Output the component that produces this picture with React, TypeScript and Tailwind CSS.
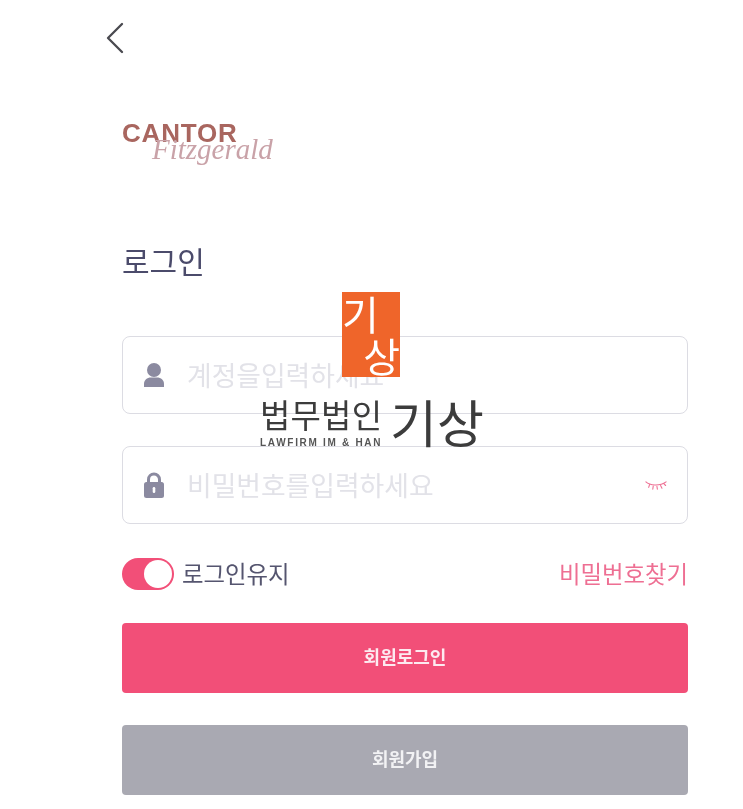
import { ChevronLeft } from "lucide-react";

const font = { fontFamily: '"Noto Sans CJK KR", "Noto Sans", sans-serif' };

function UserIcon() {
  return (
    <svg width="22" height="24" viewBox="0 0 22 24" fill="#8b8aa0">
      <circle cx="11" cy="7" r="7" />
      <path d="M1 24v-3c0-4 3-6.500 7-6.500h6c4 0 7 2.500 7 6.500v3z" />
    </svg>
  );
}

function LockIcon() {
  return (
    <svg width="20" height="26" viewBox="0 0 20 26" fill="none">
      <path d="M4.500 11V7.500a5.500 5.500 0 0 1 11 0V11" stroke="#8b8aa0" strokeWidth="3" />
      <rect x="0" y="10" width="20" height="16" rx="2.500" fill="#8b8aa0" />
      <rect x="8.700" y="15" width="2.600" height="6" rx="1.300" fill="#fff" />
    </svg>
  );
}

function ClosedEye() {
  return (
    <svg width="22" height="11" viewBox="0 0 24 12" fill="none" stroke="#ee6f93" strokeWidth="1.2" strokeLinecap="round">
      <path d="M1 2c4 4 15 5 22 0" />
      <path d="M5 5 4 8M9 6.500 8.500 10M13 6.800 13.500 10M17 6 18.500 9M20.500 4 22.500 6" />
    </svg>
  );
}

function Field({ icon, placeholder, right }: { icon: React.ReactNode; placeholder: string; right?: React.ReactNode }) {
  return (
    <div className="flex h-[78px] items-center rounded-lg border border-[#dcdce3] bg-white pl-[20px] pr-[20px]">
      <div className="flex w-[22px] justify-center">{icon}</div>
      <span className="ml-[22px] flex-1 text-[26.8px] leading-none text-[#e2e2e8]">{placeholder}</span>
      {right}
    </div>
  );
}

export default function App() {
  return (
    <div className="relative h-[809px] w-[743px] overflow-hidden bg-white blur-[0.5px]" style={font}>
      <div className="pl-[122px] pr-[55px]">
        <div className="h-[76px] pt-[10px]">
          <ChevronLeft className="ml-[-35px] h-[56px] w-[56px] text-[#4a4a50]" strokeWidth={1} />
        </div>

        {/* 로고 */}
        <div className="relative h-[90px] w-[160px] pt-[42px]">
          <div
            className="text-[26px] leading-[30px] font-bold tracking-[0.8px] text-[#a9665f]"
            style={{ fontFamily: '"Liberation Sans", sans-serif' }}
          >
            CANTOR
          </div>
          <div
            className="absolute left-[30px] top-[58px] text-[29px] leading-[30px] whitespace-nowrap text-[#c9a2a8] italic"
            style={{ fontFamily: '"Liberation Serif", serif' }}
          >
            Fitzgerald
          </div>
        </div>

        <h1 className="mt-[72px] text-[30px] leading-[44px] font-normal text-[#4b4b6b]">로그인</h1>

        <div className="mt-[54px] flex flex-col gap-[32px]">
          <Field icon={<UserIcon />} placeholder="계정을입력하세요" />
          <Field icon={<LockIcon />} placeholder="비밀번호를입력하세요" right={<ClosedEye />} />
        </div>

        <div className="mt-[34px] flex h-[32px] items-center justify-between">
          <div className="flex items-center gap-[8px]">
            <div className="flex h-[32px] w-[52px] items-center justify-end rounded-full bg-[#f24f78] pr-[2px]">
              <div className="h-[28px] w-[28px] rounded-full bg-white" />
            </div>
            <span className="text-[23.4px] leading-none text-[#55556f]">로그인유지</span>
          </div>
          <span className="text-[23.4px] leading-none text-[#ee6f93]">비밀번호찾기</span>
        </div>

        <div className="mt-[33px] flex flex-col gap-[32px]">
          <button className="h-[70px] rounded bg-[#f24f78] pb-[4px] text-[18px] font-bold text-[#fdeaf0]">회원로그인</button>
          <button className="h-[70px] rounded bg-[#a9a9b2] pb-[4px] text-[18px] font-bold text-[#f2f2f4]">회원가입</button>
        </div>
      </div>

      {/* 워터마크 */}
      <div className="absolute left-[342px] top-[292px] flex h-[85px] w-[58px] flex-col bg-[#ef652a] text-white">
        <span className="self-start text-[40px] leading-[42px]">기</span>
        <span className="self-end text-[40px] leading-[42px]">상</span>
      </div>
      <div className="absolute left-[260px] top-[392px] flex items-start text-[#3c3c3c]">
        <div className="w-[130px]">
          <div className="text-[33px] leading-[45px] tracking-[0.2px]">법무법인</div>
          <div
            className="text-[10px] leading-[12px] font-bold tracking-[1.7px] whitespace-nowrap text-[#555]"
            style={{ fontFamily: '"Liberation Sans", sans-serif' }}
          >
            LAWFIRM IM &amp; HAN
          </div>
        </div>
        <div className="text-[51px] leading-[58px]">기상</div>
      </div>
    </div>
  );
}
